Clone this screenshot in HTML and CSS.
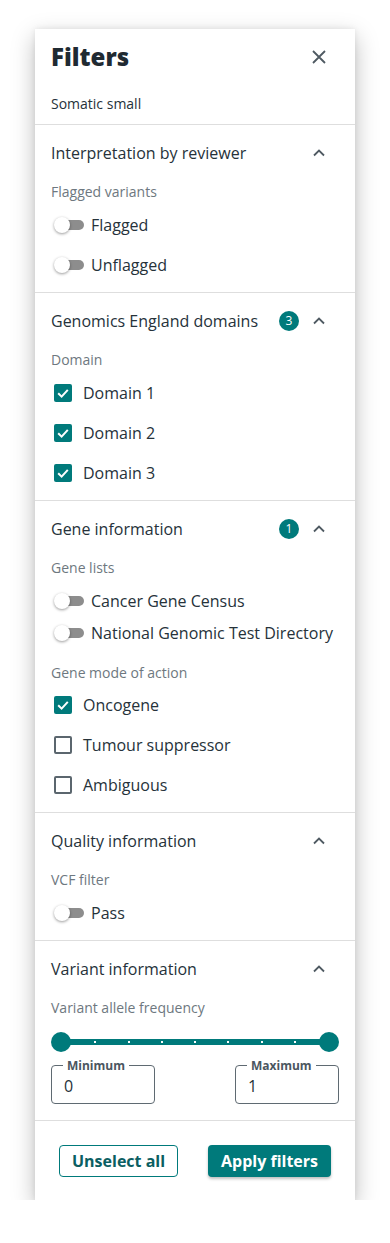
FILE: index.html
```html
<!DOCTYPE html>
<html lang="en">
<head>
  <meta charset="UTF-8" />
  <meta name="viewport" content="width=device-width, initial-scale=1.0"/>
  <title>Filters</title>
  <link rel="stylesheet" href="styles.css">
</head>
<body>
  <div class="panel">
    <div class="panel-header">
      <div class="title-row">
        <h1>Filters</h1>
        <span class="icon-btn">
          <svg width="14" height="14" viewBox="0 0 14 14"><path d="M1 1L13 13M13 1L1 13" stroke="#4f5a62" stroke-width="1.8" fill="none"/></svg>
        </span>
      </div>
      <p class="subtitle">Somatic small</p>
    </div>

    <section class="filter-section">
      <div class="section-head">
        <h2>Interpretation by reviewer</h2>
        <span class="icon-btn"><svg width="12" height="8" viewBox="0 0 12 8"><path d="M1 6.5L6 1.5L11 6.5" stroke="#4f5a62" stroke-width="1.8" fill="none"/></svg></span>
      </div>
      <div class="group-label">Flagged variants</div>
      <div class="options">
        <div class="option"><span class="switch"></span>Flagged</div>
        <div class="option"><span class="switch"></span>Unflagged</div>
      </div>
    </section>

    <section class="filter-section">
      <div class="section-head">
        <h2>Genomics England domains</h2>
        <span class="badge">3</span>
        <span class="icon-btn"><svg width="12" height="8" viewBox="0 0 12 8"><path d="M1 6.5L6 1.5L11 6.5" stroke="#4f5a62" stroke-width="1.8" fill="none"/></svg></span>
      </div>
      <div class="group-label">Domain</div>
      <div class="options">
        <div class="option"><span class="check on"><svg width="18" height="18" viewBox="0 0 18 18"><path d="M4.2 9.3L7.6 12.6L13.8 5.8" stroke="#fff" stroke-width="2" fill="none"/></svg></span>Domain 1</div>
        <div class="option"><span class="check on"><svg width="18" height="18" viewBox="0 0 18 18"><path d="M4.2 9.3L7.6 12.6L13.8 5.8" stroke="#fff" stroke-width="2" fill="none"/></svg></span>Domain 2</div>
        <div class="option"><span class="check on"><svg width="18" height="18" viewBox="0 0 18 18"><path d="M4.2 9.3L7.6 12.6L13.8 5.8" stroke="#fff" stroke-width="2" fill="none"/></svg></span>Domain 3</div>
      </div>
    </section>

    <section class="filter-section">
      <div class="section-head">
        <h2>Gene information</h2>
        <span class="badge">1</span>
        <span class="icon-btn"><svg width="12" height="8" viewBox="0 0 12 8"><path d="M1 6.5L6 1.5L11 6.5" stroke="#4f5a62" stroke-width="1.8" fill="none"/></svg></span>
      </div>
      <div class="group-label">Gene lists</div>
      <div class="options compact">
        <div class="option"><span class="switch"></span>Cancer Gene Census</div>
        <div class="option"><span class="switch"></span>National Genomic Test Directory</div>
      </div>
      <div class="group-label next">Gene mode of action</div>
      <div class="options tight">
        <div class="option"><span class="check on"><svg width="18" height="18" viewBox="0 0 18 18"><path d="M4.2 9.3L7.6 12.6L13.8 5.8" stroke="#fff" stroke-width="2" fill="none"/></svg></span>Oncogene</div>
        <div class="option"><span class="check"></span>Tumour suppressor</div>
        <div class="option"><span class="check"></span>Ambiguous</div>
      </div>
    </section>

    <section class="filter-section">
      <div class="section-head">
        <h2>Quality information</h2>
        <span class="icon-btn"><svg width="12" height="8" viewBox="0 0 12 8"><path d="M1 6.5L6 1.5L11 6.5" stroke="#4f5a62" stroke-width="1.8" fill="none"/></svg></span>
      </div>
      <div class="group-label">VCF filter</div>
      <div class="options">
        <div class="option"><span class="switch"></span>Pass</div>
      </div>
    </section>

    <section class="filter-section last">
      <div class="section-head">
        <h2>Variant information</h2>
        <span class="icon-btn"><svg width="12" height="8" viewBox="0 0 12 8"><path d="M1 6.5L6 1.5L11 6.5" stroke="#4f5a62" stroke-width="1.8" fill="none"/></svg></span>
      </div>
      <div class="group-label">Variant allele frequency</div>
      <div class="range">
        <div class="track">
          <i></i><i></i><i></i><i></i><i></i><i></i><i></i><i></i><i></i>
        </div>
        <span class="thumb start"></span>
        <span class="thumb end"></span>
      </div>
      <div class="range-fields">
        <div class="field"><span class="field-label">Minimum</span>0</div>
        <div class="field"><span class="field-label">Maximum</span>1</div>
      </div>
    </section>

    <div class="panel-footer">
      <button class="btn outline">Unselect all</button>
      <button class="btn primary">Apply filters</button>
    </div>
  </div>
</body>
</html>
```

FILE: styles.css
```css
:root {
  --teal: #007a7b;
  --teal-dark: #0b5e62;
  --text: #26323a;
  --muted: #6e7880;
  --line: #dedede;
  --font: 'Open Sans', 'Noto Sans', sans-serif;
}

body {
  margin: 0;
  padding: 0;
  background: #ffffff;
  font-family: var(--font);
  color: var(--text);
}

.panel {
  width: 320px;
  margin: 29px 0 0 35px;
  background: #fff;
  box-shadow: 0 8px 22px rgba(0, 0, 0, 0.26), 0 0 6px rgba(0, 0, 0, 0.08);
}

.panel-header {
  padding: 12px 16px 10px;
}

.title-row {
  display: flex;
  align-items: center;
  height: 32px;
}

.title-row h1 {
  flex: 1;
  margin: 0;
  font-size: 24px;
  line-height: 32px;
  font-weight: 800;
  color: #1f2a32;
}

.subtitle {
  margin: 21px 0 0;
  font-size: 14px;
  line-height: 20px;
}

.icon-btn {
  width: 40px;
  height: 22px;
  display: flex;
  align-items: center;
  justify-content: center;
  flex-shrink: 0;
}

.filter-section {
  border-top: 1px solid var(--line);
  padding: 17px 16px 7px;
}

.filter-section.last {
  padding-bottom: 16px;
}

.section-head {
  display: flex;
  align-items: center;
  height: 22px;
}

.section-head h2 {
  flex: 1;
  margin: 0;
  font-size: 16px;
  line-height: 22px;
  font-weight: 400;
}

.badge {
  width: 20px;
  height: 20px;
  border-radius: 50%;
  background: var(--teal);
  color: #fff;
  font-size: 12px;
  line-height: 20px;
  text-align: center;
}

.group-label {
  margin-top: 18px;
  font-size: 14px;
  line-height: 20px;
  color: var(--muted);
}

.group-label.next {
  margin-top: 14px;
}

.options {
  margin-top: 3px;
}

.options.compact {
  margin-top: 7px;
}

.options.tight {
  margin-top: 2px;
}

.option {
  display: flex;
  align-items: center;
  height: 40px;
  font-size: 16px;
}

.options.compact .option {
  height: 32px;
}

.switch {
  position: relative;
  width: 36px;
  height: 16px;
  margin-right: 4px;
  flex-shrink: 0;
}

.switch::before {
  content: '';
  position: absolute;
  left: 9px;
  top: 3px;
  width: 24px;
  height: 10px;
  border-radius: 5px;
  background: #8d8d8d;
}

.switch::after {
  content: '';
  position: absolute;
  left: 3px;
  top: 0;
  width: 16px;
  height: 16px;
  border-radius: 50%;
  background: #fff;
  box-shadow: 0 1px 3px rgba(0, 0, 0, 0.4);
}

.check {
  box-sizing: border-box;
  width: 18px;
  height: 18px;
  margin: 0 11px 0 3px;
  border: 2px solid #5b666e;
  border-radius: 2px;
  flex-shrink: 0;
}

.check.on {
  border: none;
  background: var(--teal);
}

.check svg {
  display: block;
}

.range {
  position: relative;
  height: 20px;
  margin-top: 14px;
}

.track {
  position: absolute;
  left: 10px;
  right: 10px;
  top: 7px;
  height: 6px;
  border-radius: 3px;
  background: var(--teal);
  display: flex;
  justify-content: space-between;
  align-items: center;
}

.track i {
  width: 2px;
  height: 2px;
  background: #fff;
}

.thumb {
  position: absolute;
  top: 0;
  width: 20px;
  height: 20px;
  border-radius: 50%;
  background: var(--teal);
}

.thumb.start { left: 0; }
.thumb.end { right: 0; }

.range-fields {
  display: flex;
  justify-content: space-between;
  margin-top: 13px;
}

.field {
  position: relative;
  box-sizing: border-box;
  width: 104px;
  height: 39px;
  padding: 3px 0 0 12px;
  border: 1px solid #5f6a72;
  border-radius: 4px;
  display: flex;
  align-items: center;
  font-size: 16px;
}

.field-label {
  position: absolute;
  top: -8px;
  left: 11px;
  padding: 0 4px;
  background: #fff;
  font-size: 12px;
  line-height: 16px;
  font-weight: 700;
  color: #4b5660;
}

.panel-footer {
  border-top: 1px solid var(--line);
  height: 79px;
  padding: 0 24px;
  display: flex;
  align-items: center;
  justify-content: space-between;
}

.btn {
  height: 32px;
  padding: 0 12px;
  font-family: var(--font);
  font-size: 16px;
  font-weight: 700;
  border-radius: 4px;
  cursor: pointer;
}

.btn.outline {
  background: #fff;
  color: var(--teal-dark);
  border: 1px solid var(--teal);
}

.btn.primary {
  background: var(--teal);
  color: #fff;
  border: none;
  padding: 0 13px;
  box-shadow: 0 2px 3px rgba(0, 0, 0, 0.25);
}
```
